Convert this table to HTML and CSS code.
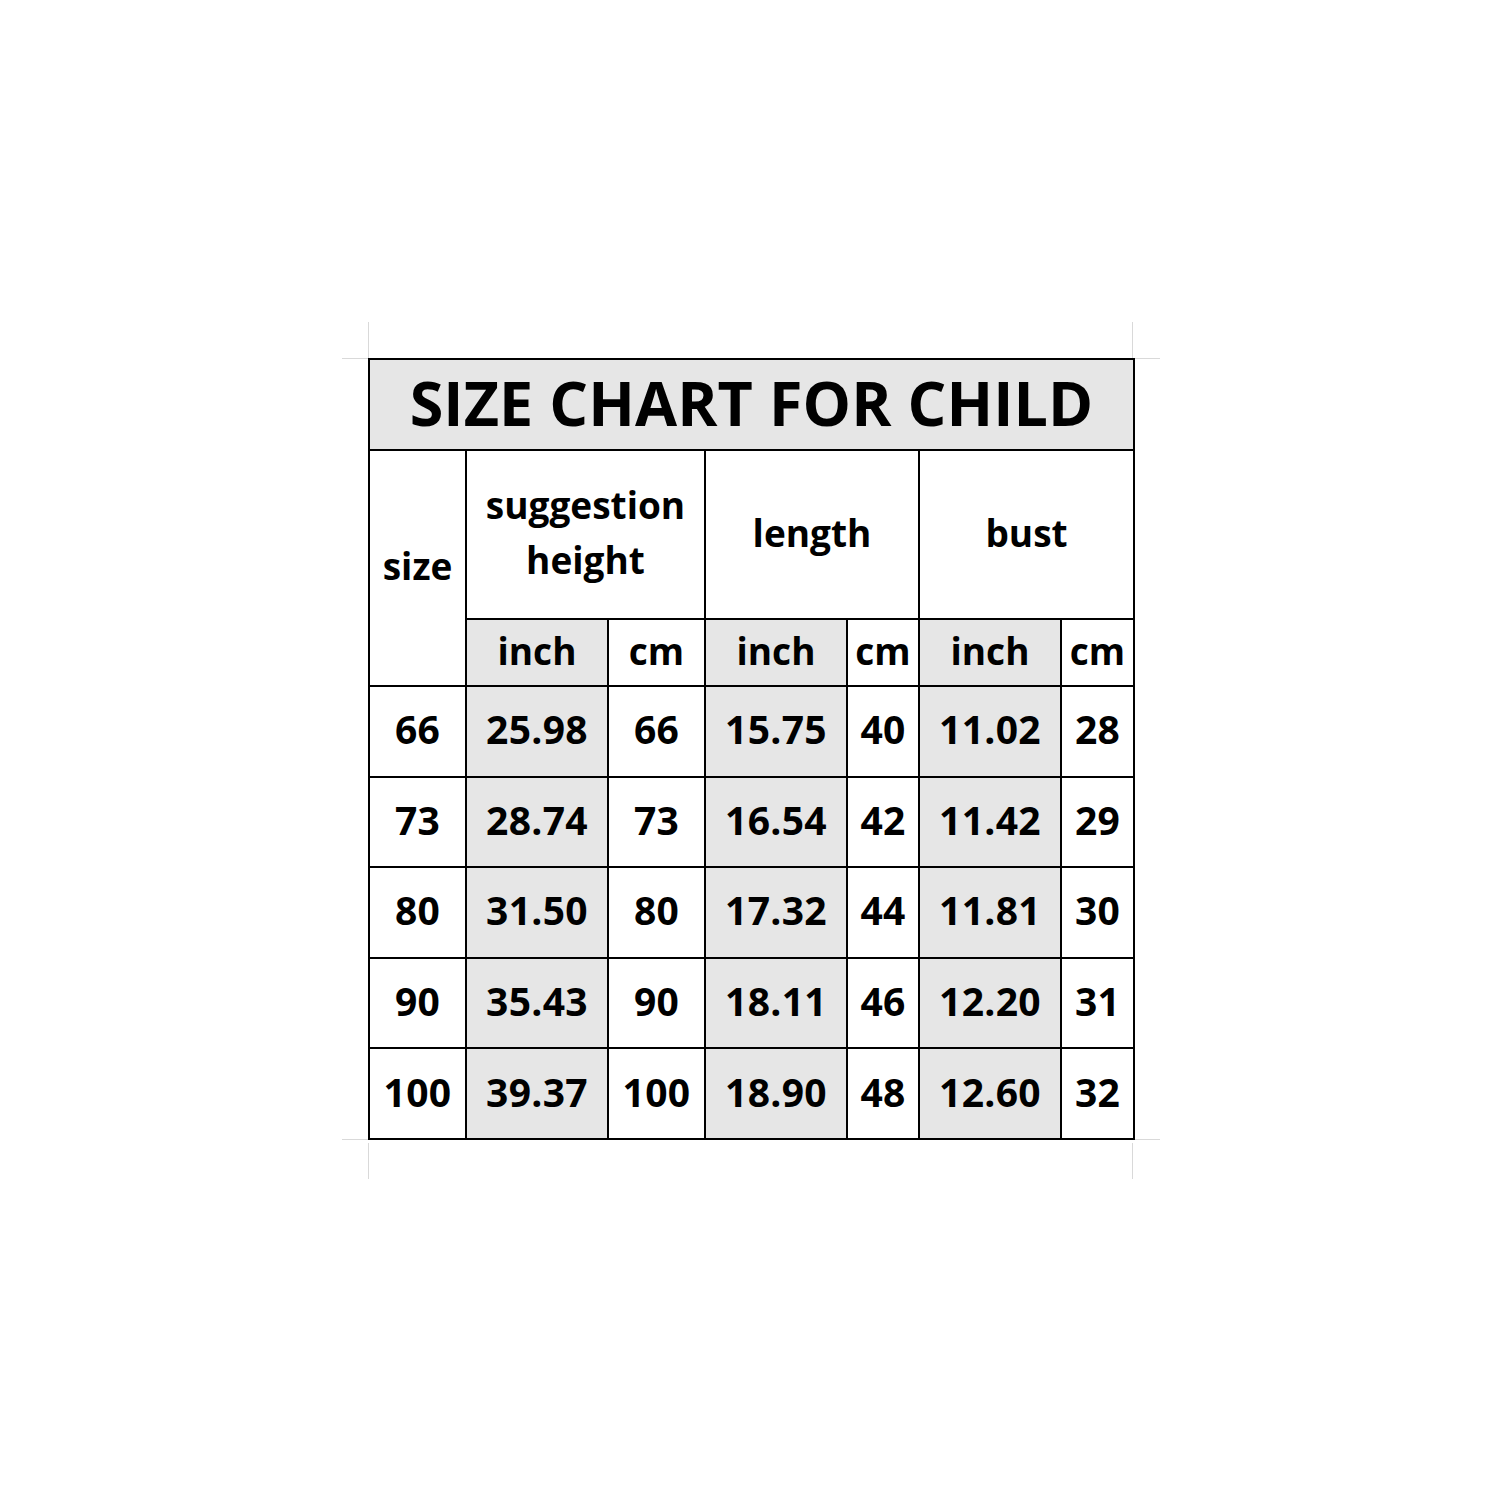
FILE: index.html
```html
<!DOCTYPE html>
<html>
<head>
<meta charset="utf-8">
<link rel="stylesheet" href="styles.css">
</head>
<body>
<div class="page">
  <div class="sheet">
    <span class="grid gv gv-tl"></span>
    <span class="grid gv gv-tr"></span>
    <span class="grid gv gv-bl"></span>
    <span class="grid gv gv-br"></span>
    <span class="grid gh gh-tl"></span>
    <span class="grid gh gh-tr"></span>
    <span class="grid gh gh-bl"></span>
    <span class="grid gh gh-br"></span>
    <table class="chart">
      <colgroup>
        <col class="c-size">
        <col class="c-wide">
        <col class="c-cm">
        <col class="c-wide">
        <col class="c-narrow">
        <col class="c-wide">
        <col class="c-narrow2">
      </colgroup>
      <tr class="r-title"><th colspan="7" class="title">SIZE CHART FOR CHILD</th></tr>
      <tr class="r-head">
        <th rowspan="2" class="size-h">size</th>
        <th colspan="2" class="group">suggestion<br>height</th>
        <th colspan="2" class="group">length</th>
        <th colspan="2" class="group">bust</th>
      </tr>
      <tr class="r-sub">
        <th class="shade">inch</th><th>cm</th>
        <th class="shade">inch</th><th>cm</th>
        <th class="shade">inch</th><th>cm</th>
      </tr>
      <tr class="r-data"><td>66</td><td class="shade">25.98</td><td>66</td><td class="shade">15.75</td><td>40</td><td class="shade">11.02</td><td>28</td></tr>
      <tr class="r-data"><td>73</td><td class="shade">28.74</td><td>73</td><td class="shade">16.54</td><td>42</td><td class="shade">11.42</td><td>29</td></tr>
      <tr class="r-data"><td>80</td><td class="shade">31.50</td><td>80</td><td class="shade">17.32</td><td>44</td><td class="shade">11.81</td><td>30</td></tr>
      <tr class="r-data"><td>90</td><td class="shade">35.43</td><td>90</td><td class="shade">18.11</td><td>46</td><td class="shade">12.20</td><td>31</td></tr>
      <tr class="r-data"><td>100</td><td class="shade">39.37</td><td>100</td><td class="shade">18.90</td><td>48</td><td class="shade">12.60</td><td>32</td></tr>
    </table>
  </div>
</div>
</body>
</html>
```

FILE: styles.css
```css
html, body {
  margin: 0;
  padding: 0;
  background: #ffffff;
}

.page {
  width: 1500px;
  height: 1500px;
  display: flex;
  align-items: flex-start;
  justify-content: center;
  font-family: "Open Sans", "Noto Sans", sans-serif;
  color: #000;
}

.sheet {
  position: relative;
  width: 765px;
  margin-left: 1px;
  margin-top: 358px;
}

.grid {
  position: absolute;
  background: #d9d9d9;
}
.gv { width: 1px; height: 36px; }
.gh { height: 1px; width: 26px; }
.gv-tl { left: 0; top: -36px; }
.gv-tr { right: 0; top: -36px; }
.gv-bl { left: 0; bottom: -39px; }
.gv-br { right: 0; bottom: -39px; }
.gh-tl { left: -26px; top: 0; }
.gh-tr { right: -27px; top: 0; }
.gh-bl { left: -26px; bottom: 0; }
.gh-br { right: -27px; bottom: 0; }

.chart {
  position: relative;
  width: 765px;
  table-layout: fixed;
  border-collapse: collapse;
  border: 2px solid #000;
}

.c-size { width: 97px; }
.c-wide { width: 142px; }
.c-cm { width: 97px; }
.c-narrow { width: 72px; }
.c-narrow2 { width: 73px; }

.chart th,
.chart td {
  box-sizing: border-box;
  border: 2px solid #000;
  padding: 0 0 5px 0;
  text-align: center;
  vertical-align: middle;
  font-weight: 700;
  white-space: nowrap;
}

.title {
  background: #e6e6e6;
  font-size: 61px;
  height: 91px;
  letter-spacing: 0.1px;
}

.r-head th {
  height: 169px;
  font-size: 37px;
  line-height: 55px;
}

.r-sub th {
  height: 67px;
  font-size: 37px;
}

.r-data td {
  height: 90.6px;
  font-size: 39px;
  letter-spacing: 0.3px;
}

.shade {
  background: #e6e6e6;
}
```
